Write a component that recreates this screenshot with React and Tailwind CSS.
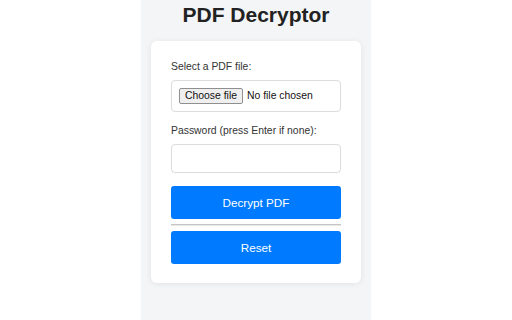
import React, { useState, useRef } from 'react';

export default function App() {
    const [password, setPassword] = useState('');
    const [fileName, setFileName] = useState('');
    const fileRef = useRef(null);

    return (
        <div className="min-h-screen bg-white flex justify-center" style={{ fontFamily: '"Liberation Sans", Arial, sans-serif' }}>
            <div className="w-[230px] min-h-[320px] bg-[#f4f5f7] px-[10px]">
                <h1 className="pt-[4px] text-center text-[21px] leading-[21px] font-bold text-[#222]">PDF Decryptor</h1>

                <div className="mt-[16px] bg-white rounded-[6px] shadow-[0_1px_6px_rgba(0,0,0,0.08)] px-[20px] pt-[20px] pb-[19px]">
                    <label className="block text-[10.4px] leading-[12px] text-[#333] mb-[7px]">Select a PDF file:</label>
                    <div className="h-[32px] border border-[#dcdcdc] rounded-[4px] px-[7px] flex items-center gap-[4px] mb-[13px] text-[10.4px] leading-[12px] text-[#111]">
                        <input
                            ref={fileRef}
                            type="file"
                            accept="application/pdf"
                            className="hidden"
                            onChange={(e) => setFileName(e.target.files[0]?.name || '')}
                        />
                        <button
                            type="button"
                            onClick={() => fileRef.current?.click()}
                            className="h-[16px] px-[5px] bg-[#efefef] border border-[#8f8f8f] rounded-[2px] text-[#111]"
                        >
                            Choose file
                        </button>
                        <span className="truncate">{fileName || 'No file chosen'}</span>
                    </div>

                    <label className="block text-[10.4px] leading-[12px] text-[#333] mb-[7px]">Password (press Enter if none):</label>
                    <input
                        type="password"
                        value={password}
                        onChange={(e) => setPassword(e.target.value)}
                        className="block w-full h-[29px] border border-[#dcdcdc] rounded-[4px] px-[7px] text-[10.4px] outline-none"
                    />

                    <button className="mt-[13px] w-full h-[33px] bg-[#007bff] text-white text-[11.7px] rounded-[3px]">Decrypt PDF</button>

                    <div className="my-[5px] border-t border-t-[#c4c4c4] border-b border-b-[#e8e8e8]" />

                    <button className="w-full h-[33px] bg-[#007bff] text-white text-[11.7px] rounded-[3px]">Reset</button>
                </div>
            </div>
        </div>
    );
}
